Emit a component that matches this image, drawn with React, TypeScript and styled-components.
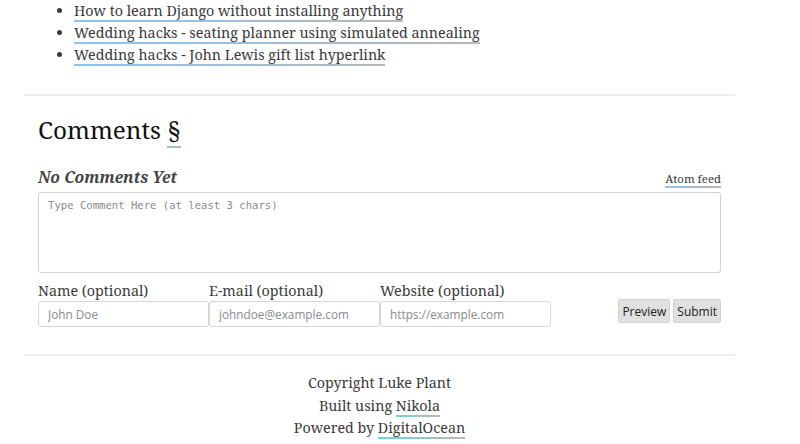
import { createGlobalStyle, styled } from "styled-components";

const GlobalStyle = createGlobalStyle`
  body {
    margin: 0;
    background: #fff;
    font-family: "Noto Serif", "DejaVu Serif", "Liberation Serif", serif;
    color: #3a3a3a;
  }
`;

const Page = styled.div`
  width: 711px;
  margin-left: 24px;
`;

const LinkList = styled.ul`
  margin: 0 0 28px;
  padding: 0 0 0 50px;
  font-size: 14.3px;
  line-height: 22px;
`;

const Item = styled.li``;

const Link = styled.a<{ $teal?: boolean }>`
  color: #3a3a3a;
  text-decoration: none;
  padding-bottom: 2px;
  background-image: linear-gradient(
    to right,
    ${(p) => (p.$teal ? "#6ad6d6" : "#8cc4f2")},
    #b8b8b8
  );
  background-size: 100% 2px;
  background-position: 0 100%;
  background-repeat: no-repeat;
`;

const Rule = styled.hr`
  margin: 0;
  border: none;
  border-top: 2px solid #eeeeee;
`;

const Section = styled.section`
  padding: 18px 14px 27px;
`;

const Heading = styled.h2`
  margin: 0 0 20px;
  font-size: 24.3px;
  font-weight: 400;
  line-height: 32px;
  color: #111;
`;

const Anchor = styled(Link)`
  color: #111;
`;

const CountRow = styled.div`
  display: flex;
  justify-content: space-between;
  align-items: baseline;
  margin-bottom: 4px;
`;

const NoComments = styled.h4`
  margin: 0;
  font-size: 15.7px;
  font-weight: 700;
  font-style: italic;
  color: #444;
`;

const FeedLink = styled(Link)`
  font-size: 11.4px;
`;

const CommentBox = styled.textarea`
  display: block;
  box-sizing: border-box;
  width: 683px;
  height: 81px;
  margin: 0;
  padding: 6px 9px;
  border: 1px solid #d2d2d2;
  border-radius: 3px;
  resize: none;
  font-family: "DejaVu Sans Mono", monospace;
  font-size: 10.6px;
  &::placeholder {
    color: #8a8a8a;
  }
`;

const FieldsRow = styled.div`
  display: flex;
  align-items: flex-end;
  margin-top: 8px;
`;

const Field = styled.label`
  display: flex;
  flex-direction: column;
  width: 171px;
  font-size: 14.3px;
  line-height: 20px;
  color: #3a3a3a;
`;

const Input = styled.input`
  box-sizing: border-box;
  width: 171px;
  height: 26px;
  margin-top: 0;
  padding: 0 9px;
  border: 1px solid #d6d6d6;
  border-radius: 3px;
  font-family: "Open Sans", sans-serif;
  font-size: 11.8px;
  &::placeholder {
    color: #8a8a8a;
  }
`;

const Buttons = styled.div`
  display: flex;
  gap: 3px;
  margin-left: auto;
  margin-bottom: 4px;
`;

const Button = styled.button`
  height: 24px;
  padding: 0 3px;
  border: 1px solid #d2d2d2;
  border-radius: 2px;
  background: #e0e0e0;
  font-family: "Open Sans", sans-serif;
  font-size: 12px;
  color: #222;
`;

const Footer = styled.footer`
  padding-top: 16px;
  text-align: center;
  font-size: 14.3px;
  line-height: 22.5px;
`;

const links = [
  "How to learn Django without installing anything",
  "Wedding hacks - seating planner using simulated annealing",
  "Wedding hacks - John Lewis gift list hyperlink",
];

export default function App() {
  return (
    <>
      <GlobalStyle />
      <Page>
        <LinkList>
          {links.map((title) => (
            <Item key={title}>
              <Link href="#">{title}</Link>
            </Item>
          ))}
        </LinkList>
        <Rule />
        <Section>
          <Heading>
            Comments <Anchor href="#">§</Anchor>
          </Heading>
          <CountRow>
            <NoComments>No Comments Yet</NoComments>
            <FeedLink href="#">Atom feed</FeedLink>
          </CountRow>
          <CommentBox placeholder="Type Comment Here (at least 3 chars)" />
          <FieldsRow>
            <Field>
              Name (optional)
              <Input placeholder="John Doe" />
            </Field>
            <Field>
              E-mail (optional)
              <Input placeholder="johndoe@example.com" />
            </Field>
            <Field>
              Website (optional)
              <Input placeholder="https://example.com" />
            </Field>
            <Buttons>
              <Button>Preview</Button>
              <Button>Submit</Button>
            </Buttons>
          </FieldsRow>
        </Section>
        <Rule />
        <Footer>
          <div>Copyright Luke Plant</div>
          <div>
            Built using <Link $teal href="#">Nikola</Link>
          </div>
          <div>
            Powered by <Link $teal href="#">DigitalOcean</Link>
          </div>
        </Footer>
      </Page>
    </>
  );
}
